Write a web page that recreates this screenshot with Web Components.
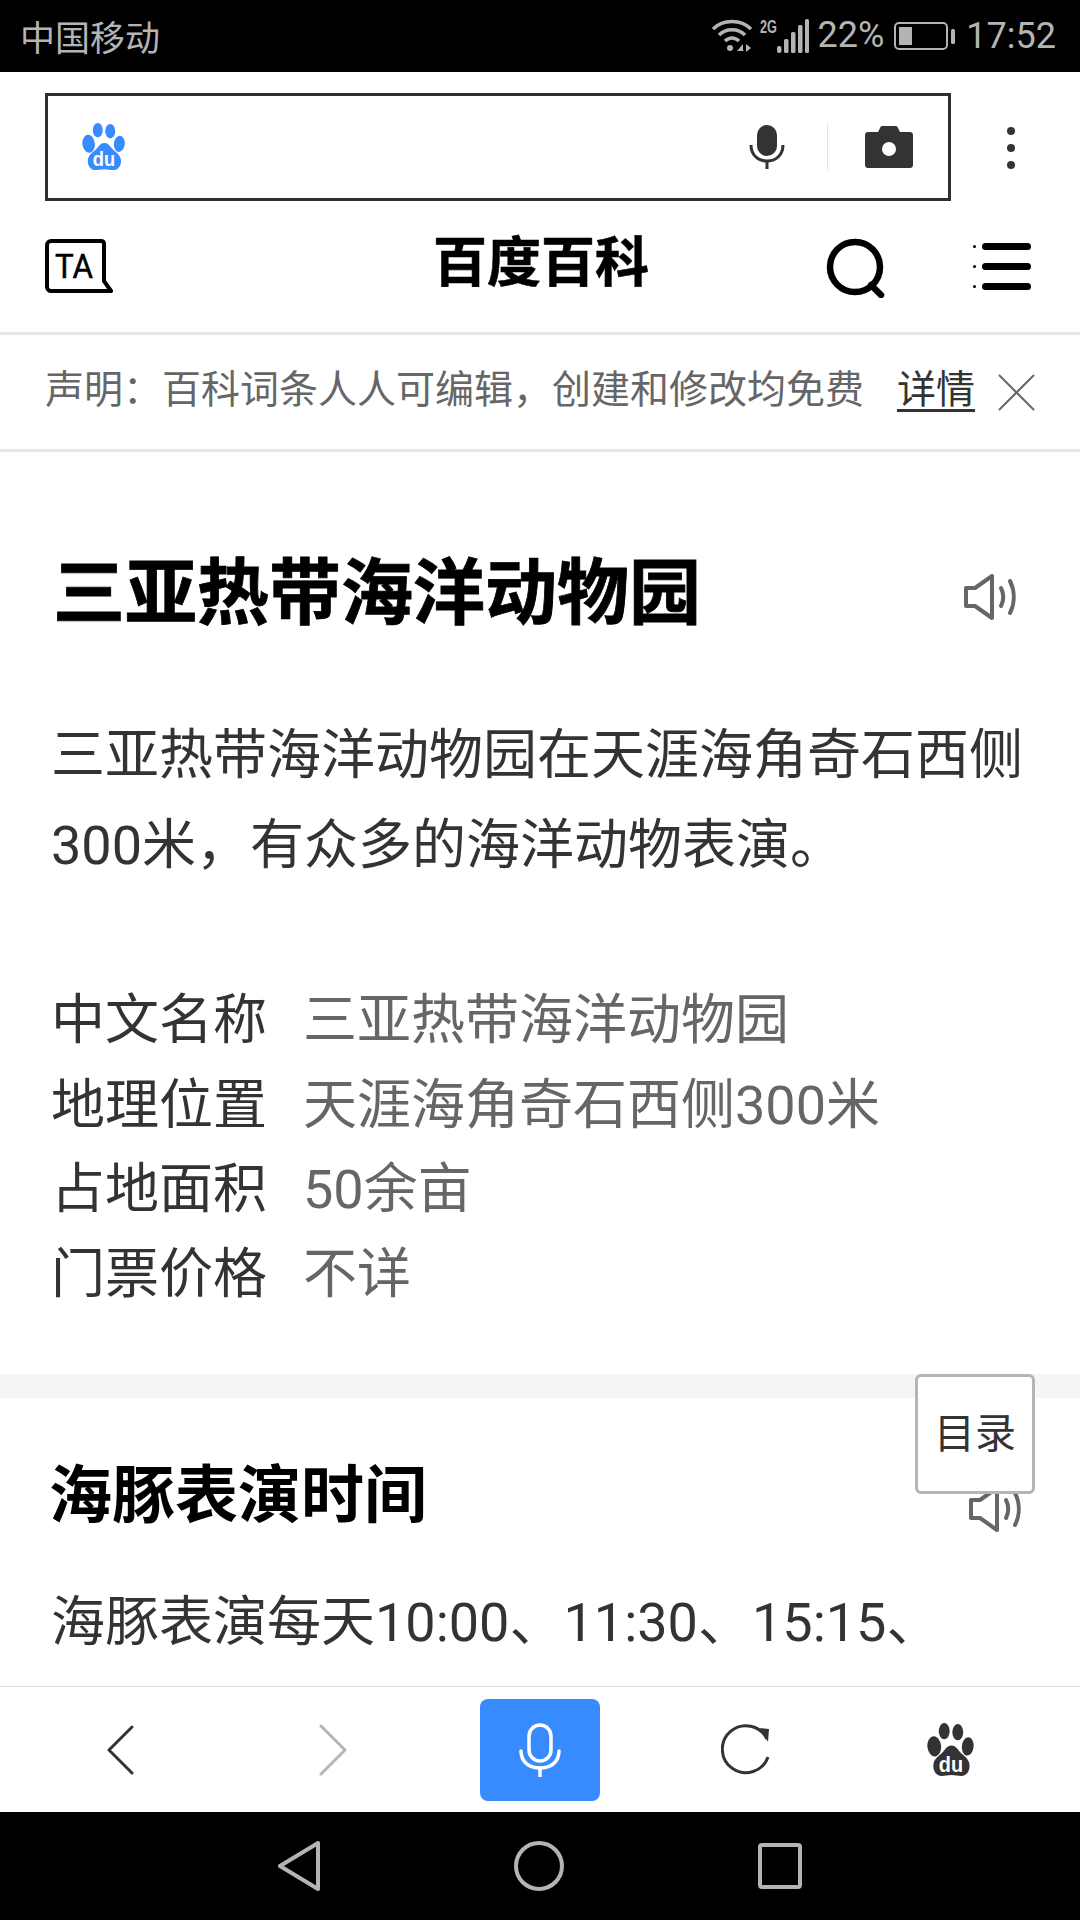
<!DOCTYPE html>
<html lang="zh">
<head>
<meta charset="utf-8">
<style>
    html, body { margin: 0; padding: 0; background: #fff; }
    body { font-family: "Roboto", "Noto Sans CJK SC", sans-serif; }
</style>
</head>
<body>
<phone-page>
    <status-bar></status-bar>
    <search-box></search-box>
    <baike-header></baike-header>
    <notice-bar></notice-bar>
    <article-body></article-body>
    <tool-bar></tool-bar>
    <nav-bar></nav-bar>
</phone-page>

<script>
    const PAW = (fill, hole) => `
        <ellipse cx="8" cy="23" rx="7.5" ry="10" transform="rotate(-8 8 23)" fill="${fill}"/>
        <ellipse cx="19" cy="8" rx="6" ry="8" fill="${fill}"/>
        <ellipse cx="34" cy="9" rx="6" ry="8" fill="${fill}"/>
        <ellipse cx="45" cy="23" rx="6.500" ry="9" transform="rotate(8 45 23)" fill="${fill}"/>
        <path d="M27 22c5 0 7 4 10 7s10 6 10 13c0 6-4 10-9 10-4 0-7-1-11-1s-7 1-11 1c-5 0-9-4-9-10 0-7 7-10 10-13s5-7 10-7z" fill="${fill}"/>
        <text x="26.500" y="48" text-anchor="middle" font-family="Liberation Sans, sans-serif" font-size="22" font-weight="700" fill="${hole}">du</text>`;

    class PhonePage extends HTMLElement {
        constructor() {
            super();
            this.attachShadow({ mode: 'open' });
            this.shadowRoot.innerHTML = `
                <style>
                    :host { display: flex; flex-direction: column; width: 1080px; height: 1920px; overflow: hidden; position: relative; background: #fff; }
                </style>
                <slot></slot>`;
        }
    }

    class StatusBar extends HTMLElement {
        constructor() {
            super();
            this.attachShadow({ mode: 'open' });
            this.shadowRoot.innerHTML = `
                <style>
                    :host { display: flex; align-items: center; height: 72px; flex: none; background: #000; color: #b4b4b4; padding: 0 24px 0 20px; box-sizing: border-box; font-family: "Roboto", "Noto Sans CJK SC", sans-serif; }
                    .carrier { font-size: 35px; font-family: "Noto Sans CJK SC", sans-serif; flex: 1; line-height: 72px; }
                    .right { display: flex; align-items: center; }
                    svg { display: block; }
                    .pct { font-size: 36px; margin-left: 6px; margin-top: -2px; }
                    .time { font-size: 36px; margin-left: 10px; }
                </style>
                <span class="carrier">中国移动</span>
                <div class="right">
                    <svg width="42" height="36" viewBox="0 0 42 36" fill="none" stroke="#b4b4b4" stroke-width="3.400">
                        <path d="M2 11C12 1 30 1 40 11"/>
                        <path d="M8 17c7-7 19-7 26 0"/>
                        <path d="M14 23c4-4 10-4 14 0"/>
                        <circle cx="19" cy="30" r="3" fill="#b4b4b4" stroke="none"/>
                        <path d="M26 33h7l-1-1v-6zM35 26l5 4-5 4z" fill="#b4b4b4" stroke="none"/>
                    </svg>
                    <svg width="52" height="52" viewBox="0 -8 52 52" style="margin-left:7px">
                        <text x="0" y="15" font-family="Liberation Sans, sans-serif" font-weight="700" font-size="19" fill="#b4b4b4" textLength="17" lengthAdjust="spacingAndGlyphs">2G</text>
                        <g fill="#b4b4b4">
                            <rect x="17" y="28" width="4.500" height="7" rx="2"/>
                            <rect x="24" y="21" width="4.500" height="14" rx="1.500"/>
                            <rect x="31" y="14" width="4.500" height="21" rx="1.500"/>
                            <rect x="38" y="7" width="4.500" height="28" rx="1.500"/>
                            <rect x="45" y="1" width="4" height="34" rx="1.500"/>
                        </g>
                    </svg>
                    <span class="pct">22%</span>
                    <svg width="62" height="30" viewBox="0 0 62 30" style="margin-left:10px">
                        <rect x="1" y="2" width="52" height="26" rx="4" fill="none" stroke="#b4b4b4" stroke-width="2"/>
                        <rect x="5" y="6" width="13" height="18" fill="#b4b4b4"/>
                        <rect x="57" y="8" width="4" height="15" rx="1.500" fill="#b4b4b4"/>
                    </svg>
                    <span class="time">17:52</span>
                </div>`;
        }
    }

    class SearchBox extends HTMLElement {
        constructor() {
            super();
            this.attachShadow({ mode: 'open' });
            this.shadowRoot.innerHTML = `
                <style>
                    :host { display: flex; align-items: center; flex: none; height: 108px; margin-top: 21px; padding-left: 45px; }
                    .box { display: flex; align-items: center; width: 906px; height: 108px; box-sizing: border-box; border: 3px solid #2f2f2f; }
                    .paw { margin-left: 34px; flex: 1; }
                    svg { display: block; }
                    .sep { width: 1px; height: 48px; background: #e4e4e4; margin: 0 37px 0 42px; }
                    .cam { margin-right: 35px; }
                    .dots { margin-left: 55px; }
                </style>
                <div class="box">
                    <div class="paw"><svg width="44" height="48" viewBox="0 0 53 53" preserveAspectRatio="none">${PAW('#388aff', '#fff')}</svg></div>
                    <svg width="36" height="46" viewBox="0 0 36 46">
                        <rect x="8" y="1" width="20" height="31" rx="10" fill="#333"/>
                        <path d="M2 21c0 10 7 16 16 16s16-6 16-16" fill="none" stroke="#333" stroke-width="3"/>
                        <path d="M18 36v9" stroke="#333" stroke-width="3"/>
                    </svg>
                    <div class="sep"></div>
                    <svg class="cam" width="48" height="42" viewBox="0 0 48 42">
                        <path d="M3 6h10l2-4c.4-1 1-2 2-2h14c1 0 1.600 1 2 2l2 4h10c1.700 0 3 1.300 3 3v30c0 1.700-1.300 3-3 3H3c-1.700 0-3-1.300-3-3V9c0-1.700 1.300-3 3-3z" fill="#333"/>
                        <circle cx="24" cy="23" r="7" fill="#fff"/>
                    </svg>
                </div>
                <svg class="dots" width="10" height="44" viewBox="0 0 10 44" fill="#333" style="margin-top:2px">
                    <circle cx="5" cy="5" r="4"/><circle cx="5" cy="22" r="4"/><circle cx="5" cy="39" r="4"/>
                </svg>`;
        }
    }

    class BaikeHeader extends HTMLElement {
        constructor() {
            super();
            this.attachShadow({ mode: 'open' });
            this.shadowRoot.innerHTML = `
                <style>
                    :host { display: flex; align-items: center; flex: none; height: 134px; padding: 0 45px; box-sizing: border-box; border-bottom: 3px solid #e6e6e6; }
                    svg { display: block; flex: none; }
                    .title { font-size: 54px; font-weight: 700; color: #000; margin-left: 320px; width: 216px; white-space: nowrap; line-height: 70px; margin-top: -6px; -webkit-text-stroke: 0.6px #000; }
                    .search { margin-left: 177px; margin-top: 2px; }
                    .menu { margin-left: 87px; }
                </style>
                <svg width="68" height="56" viewBox="0 0 68 56" fill="none">
                    <path d="M6 2h50c2 0 3 1 3 3v37l7 10H6c-2 0-4-2-4-4V6c0-2 2-4 4-4z" stroke="#000" stroke-width="4" stroke-linejoin="round"/>
                    <text x="10" y="39" font-family="Roboto, sans-serif" font-size="34" stroke="#000" stroke-width="0.500" fill="#000" textLength="38" lengthAdjust="spacingAndGlyphs">TA</text>
                </svg>
                <span class="title">百度百科</span>
                <svg class="search" width="60" height="60" viewBox="0 0 60 60" fill="none" stroke="#000" stroke-width="6.500">
                    <circle cx="29" cy="29" r="25"/>
                    <path d="M45 47l10 10" stroke-linecap="round"/>
                </svg>
                <svg class="menu" width="58" height="48" viewBox="0 0 58 48">
                    <g fill="#000">
                        <rect x="9" y="0" width="49" height="7" rx="3.500"/>
                        <rect x="9" y="20" width="49" height="7" rx="3.500"/>
                        <rect x="9" y="40" width="49" height="7" rx="3.500"/>
                        <circle cx="1.500" cy="3.500" r="1.500"/>
                        <circle cx="1.500" cy="23.500" r="1.500"/>
                        <circle cx="1.500" cy="43.500" r="1.500"/>
                    </g>
                </svg>`;
        }
    }

    class NoticeBar extends HTMLElement {
        constructor() {
            super();
            this.attachShadow({ mode: 'open' });
            this.shadowRoot.innerHTML = `
                <style>
                    :host { display: flex; align-items: center; flex: none; height: 117px; padding: 0 42px 0 45px; box-sizing: border-box; border-bottom: 3px solid #e6e6e6; }
                    .text { font-size: 39px; line-height: 60px; color: #666; white-space: nowrap; width: 818px; margin-bottom: 4px; }
                    a { font-size: 39px; line-height: 60px; color: #333; text-decoration: underline; text-underline-offset: 6px; margin-left: 34px; margin-bottom: 4px; }
                    svg { display: block; margin-left: 23px; }
                </style>
                <span class="text">声明&#xFF1A;百科词条人人可编辑&#xFF0C;创建和修改均免费</span>
                <a>详情</a>
                <svg width="37" height="37" viewBox="0 0 38 38" stroke="#666" stroke-width="2" fill="none">
                    <path d="M1 1l36 36M37 1L1 37"/>
                </svg>`;
        }
    }

    class SpeakerIcon extends HTMLElement {
        constructor() {
            super();
            this.attachShadow({ mode: 'open' });
            this.shadowRoot.innerHTML = `
                <style>
                    :host { display: block; width: 54px; height: 46px; }
                    svg { display: block; }
                </style>
                <svg width="54" height="46" viewBox="0 0 54 46" fill="none" stroke="#666" stroke-width="4" stroke-linecap="round" stroke-linejoin="round">
                    <path d="M2 14h9L28 2v42L11 32H2z"/>
                    <path d="M37 14c3 6 3 12 0 18"/>
                    <path d="M46 7c5 10 5 22 0 32"/>
                </svg>`;
        }
    }

    class InfoRow extends HTMLElement {
        constructor() {
            super();
            this.attachShadow({ mode: 'open' });
            this.shadowRoot.innerHTML = `
                <style>
                    :host { display: flex; height: 84.500px; line-height: 84.500px; font-size: 54px; white-space: nowrap; }
                    .label { width: 252px; color: #333; }
                    .value { color: #666; }
                </style>
                <span class="label"><slot name="label"></slot></span>
                <span class="value"><slot name="value"></slot></span>`;
        }
    }

    class ArticleBody extends HTMLElement {
        constructor() {
            super();
            this.attachShadow({ mode: 'open' });
            this.shadowRoot.innerHTML = `
                <style>
                    :host { display: block; flex: 1; min-height: 0; overflow: hidden; position: relative; }
                    h1 { margin: 0; padding: 96px 62px 0 53px; height: 92px; display: flex; align-items: center; justify-content: space-between; font-size: 72px; line-height: 92px; font-weight: 700; color: #000; -webkit-text-stroke: 0.8px #000; }
                    h1 speaker-icon { margin-top: 5px; }
                    h2 { margin: 0; padding: 53px 57px 0 49px; height: 90px; display: flex; align-items: center; justify-content: space-between; font-size: 63px; line-height: 90px; font-weight: 700; color: #000; }
                    h2 speaker-icon { margin-top: 26px; }
                    p { margin: 0; font-size: 54px; line-height: 90px; color: #333; }
                    .intro { padding: 71px 30px 0 51px; height: 180px; }
                    .info { padding: 88px 0 0 51px; height: 338px; }
                    .band { height: 24px; background: #f5f5f5; margin-top: 57px; }
                    .sec { padding: 34px 30px 0 51px; line-height: 96px; white-space: nowrap; }
                </style>
                <h1>三亚热带海洋动物园<speaker-icon></speaker-icon></h1>
                <p class="intro">三亚热带海洋动物园在天涯海角奇石西侧300米&#xFF0C;有众多的海洋动物表演。</p>
                <div class="info">
                    <info-row><span slot="label">中文名称</span><span slot="value">三亚热带海洋动物园</span></info-row>
                    <info-row><span slot="label">地理位置</span><span slot="value">天涯海角奇石西侧300米</span></info-row>
                    <info-row><span slot="label">占地面积</span><span slot="value">50余亩</span></info-row>
                    <info-row><span slot="label">门票价格</span><span slot="value">不详</span></info-row>
                </div>
                <div class="band"></div>
                <h2>海豚表演时间<speaker-icon></speaker-icon></h2>
                <p class="sec">海豚表演每天10:00、11:30、15:15、<br>16:30&#xFF0C;其他动物表演时间不一。</p>`;
        }
    }

    class CatalogButton extends HTMLElement {
        constructor() {
            super();
            this.attachShadow({ mode: 'open' });
            this.shadowRoot.innerHTML = `
                <style>
                    :host { position: absolute; left: 915px; top: 1374px; width: 120px; height: 120px; box-sizing: border-box; display: flex; align-items: center; justify-content: center; background: #fff; border: 3px solid #b5b5b5; border-radius: 6px; font-size: 41px; line-height: 50px; color: #333; }
                </style>
                目录`;
        }
    }

    class ToolBar extends HTMLElement {
        constructor() {
            super();
            this.attachShadow({ mode: 'open' });
            this.shadowRoot.innerHTML = `
                <style>
                    :host { display: grid; grid-template-columns: 208px 216px 198px 214px 1fr; padding: 0 31px 0 17px; align-items: center; justify-items: center; flex: none; height: 126px; box-sizing: border-box; border-top: 1px solid #e0e0e0; background: #fff; }
                    svg { display: block; }
                    .mic { width: 120px; height: 102px; background: #388aff; border-radius: 8px; display: flex; align-items: center; justify-content: center; }
                </style>
                <svg width="30" height="50" viewBox="0 0 30 50" fill="none" stroke="#333" stroke-width="3" stroke-linecap="round" stroke-linejoin="round"><path d="M26 2L3 25l23 23"/></svg>
                <svg width="30" height="52" viewBox="0 0 30 52" fill="none" stroke="#b5b5b5" stroke-width="3" stroke-linecap="round" stroke-linejoin="round"><path d="M3 2l24 24L3 50"/></svg>
                <div class="mic">
                    <svg width="42" height="54" viewBox="0 0 42 54" fill="none" stroke="#fff" stroke-width="3.500" stroke-linecap="round">
                        <rect x="10" y="2" width="22" height="36" rx="11"/>
                        <path d="M2 28c0 11 8 17 19 17s19-6 19-17"/>
                        <path d="M21 45v8"/>
                    </svg>
                </div>
                <svg width="50" height="52" viewBox="0 0 50 52" fill="none" stroke="#333" stroke-width="3"><path d="M46 15A23.500 23.500 0 1 0 47 33"/><path d="M39 4l9 1-1 13z" fill="#333" stroke="none"/></svg>
                <svg width="48" height="54" viewBox="0 0 53 53" preserveAspectRatio="none">${PAW('#333', '#fff')}</svg>`;
        }
    }

    class NavBar extends HTMLElement {
        constructor() {
            super();
            this.attachShadow({ mode: 'open' });
            this.shadowRoot.innerHTML = `
                <style>
                    :host { display: flex; align-items: center; justify-content: center; gap: 194px; flex: none; height: 108px; background: #000; padding-left: 0; }
                    svg { display: block; }
                </style>
                <svg width="42" height="50" viewBox="0 0 42 50" fill="none" stroke="#b4b4b4" stroke-width="4" stroke-linejoin="round"><path d="M40 2v46L2 25z"/></svg>
                <svg width="50" height="50" viewBox="0 0 50 50" fill="none" stroke="#b4b4b4" stroke-width="4"><circle cx="25" cy="25" r="23"/></svg>
                <svg width="44" height="46" viewBox="0 0 44 46" fill="none" stroke="#b4b4b4" stroke-width="4"><rect x="2" y="2" width="40" height="42" rx="2"/></svg>`;
        }
    }

    customElements.define('phone-page', PhonePage);
    customElements.define('status-bar', StatusBar);
    customElements.define('search-box', SearchBox);
    customElements.define('baike-header', BaikeHeader);
    customElements.define('notice-bar', NoticeBar);
    customElements.define('speaker-icon', SpeakerIcon);
    customElements.define('info-row', InfoRow);
    customElements.define('article-body', ArticleBody);
    customElements.define('catalog-button', CatalogButton);
    customElements.define('tool-bar', ToolBar);
    customElements.define('nav-bar', NavBar);

    document.querySelector('phone-page').appendChild(document.createElement('catalog-button'));
</script>
</body>
</html>
